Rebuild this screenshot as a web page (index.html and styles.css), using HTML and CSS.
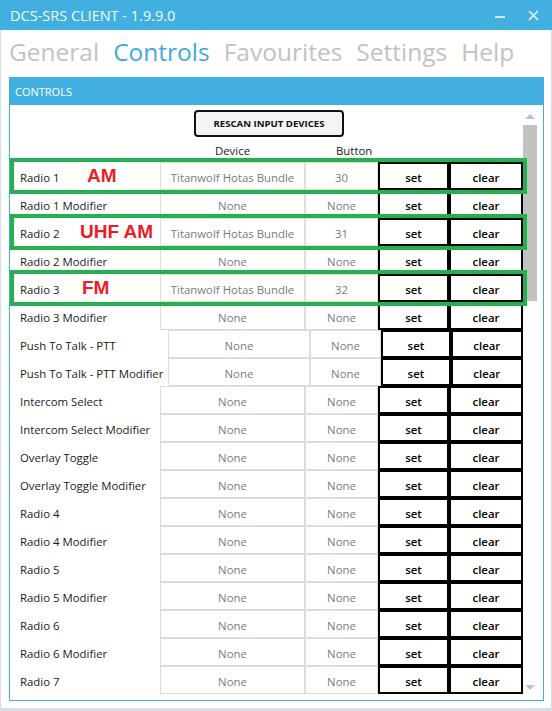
FILE: index.html
```html
<!DOCTYPE html>
<html>
<head>
<meta charset="utf-8">
<link rel="stylesheet" href="styles.css">
</head>
<body>
<div class="window">
  <div class="titlebar">
    <span class="title">DCS-SRS CLIENT - 1.9.9.0</span>
    <div class="winbtns">
      <span class="minimize"></span>
      <svg class="close" width="11" height="11" viewBox="0 0 11 11"><path d="M1 1L10 10M10 1L1 10" stroke="#dbeff9" stroke-width="1.7" fill="none"/></svg>
    </div>
  </div>
  <div class="content">
    <nav class="tabs">
      <span class="tab">General</span>
      <span class="tab active">Controls</span>
      <span class="tab">Favourites</span>
      <span class="tab">Settings</span>
      <span class="tab">Help</span>
    </nav>
    <section class="panel">
      <div class="panel-head">CONTROLS</div>
      <div class="panel-body">
        <div class="viewport">
          <div class="rescan-wrap"><button class="rescan">RESCAN INPUT DEVICES</button></div>
          <div class="ghead">
            <span></span>
            <span class="h-device">Device</span>
            <span class="h-button">Button</span>
          </div>

          <div class="row">
            <span class="label">Radio 1</span><span class="cell">Titanwolf Hotas Bundle</span><span class="cell">30</span><span class="act">set</span><span class="act">clear</span>
            <span class="note note-am">AM</span><span class="mark"></span>
          </div>
          <div class="row">
            <span class="label">Radio 1 Modifier</span><span class="cell">None</span><span class="cell">None</span><span class="act">set</span><span class="act">clear</span>
          </div>
          <div class="row">
            <span class="label">Radio 2</span><span class="cell">Titanwolf Hotas Bundle</span><span class="cell">31</span><span class="act">set</span><span class="act">clear</span>
            <span class="note note-uhf">UHF AM</span><span class="mark"></span>
          </div>
          <div class="row">
            <span class="label">Radio 2 Modifier</span><span class="cell">None</span><span class="cell">None</span><span class="act">set</span><span class="act">clear</span>
          </div>
          <div class="row">
            <span class="label">Radio 3</span><span class="cell">Titanwolf Hotas Bundle</span><span class="cell">32</span><span class="act">set</span><span class="act">clear</span>
            <span class="note note-fm">FM</span><span class="mark"></span>
          </div>
          <div class="row">
            <span class="label">Radio 3 Modifier</span><span class="cell">None</span><span class="cell">None</span><span class="act">set</span><span class="act">clear</span>
          </div>
          <div class="row wide">
            <span class="label">Push To Talk - PTT</span><span class="cell">None</span><span class="cell">None</span><span class="act">set</span><span class="act">clear</span>
          </div>
          <div class="row wide">
            <span class="label">Push To Talk - PTT Modifier</span><span class="cell">None</span><span class="cell">None</span><span class="act">set</span><span class="act">clear</span>
          </div>
          <div class="row">
            <span class="label">Intercom Select</span><span class="cell">None</span><span class="cell">None</span><span class="act">set</span><span class="act">clear</span>
          </div>
          <div class="row">
            <span class="label">Intercom Select Modifier</span><span class="cell">None</span><span class="cell">None</span><span class="act">set</span><span class="act">clear</span>
          </div>
          <div class="row">
            <span class="label">Overlay Toggle</span><span class="cell">None</span><span class="cell">None</span><span class="act">set</span><span class="act">clear</span>
          </div>
          <div class="row">
            <span class="label">Overlay Toggle Modifier</span><span class="cell">None</span><span class="cell">None</span><span class="act">set</span><span class="act">clear</span>
          </div>
          <div class="row">
            <span class="label">Radio 4</span><span class="cell">None</span><span class="cell">None</span><span class="act">set</span><span class="act">clear</span>
          </div>
          <div class="row">
            <span class="label">Radio 4 Modifier</span><span class="cell">None</span><span class="cell">None</span><span class="act">set</span><span class="act">clear</span>
          </div>
          <div class="row">
            <span class="label">Radio 5</span><span class="cell">None</span><span class="cell">None</span><span class="act">set</span><span class="act">clear</span>
          </div>
          <div class="row">
            <span class="label">Radio 5 Modifier</span><span class="cell">None</span><span class="cell">None</span><span class="act">set</span><span class="act">clear</span>
          </div>
          <div class="row">
            <span class="label">Radio 6</span><span class="cell">None</span><span class="cell">None</span><span class="act">set</span><span class="act">clear</span>
          </div>
          <div class="row">
            <span class="label">Radio 6 Modifier</span><span class="cell">None</span><span class="cell">None</span><span class="act">set</span><span class="act">clear</span>
          </div>
          <div class="row">
            <span class="label">Radio 7</span><span class="cell">None</span><span class="cell">None</span><span class="act">set</span><span class="act">clear</span>
          </div>
        </div>
        <div class="vscroll">
          <div class="sb-btn"><span class="arrow-up"></span></div>
          <div class="sb-track"><div class="sb-thumb"></div></div>
          <div class="sb-btn"><span class="arrow-down"></span></div>
        </div>
      </div>
    </section>
  </div>
</div>
</body>
</html>
```

FILE: styles.css
```css
* { box-sizing: border-box; margin: 0; padding: 0; }

body {
  margin: 0;
  background: #ffffff;
  font-family: "Open Sans", "Noto Sans", sans-serif;
}

.window {
  width: 552px;
  height: 711px;
  display: flex;
  flex-direction: column;
  overflow: hidden;
  background: #ffffff;
}

.titlebar {
  height: 30px;
  flex: none;
  background: #41afe0;
  color: #ffffff;
  display: flex;
  align-items: center;
  padding-left: 10px;
  padding-right: 13px;
}

.title {
  font-size: 14.5px;
  color: #f4fbfe;
}

.winbtns {
  margin-left: auto;
  display: flex;
  align-items: center;
  gap: 23px;
}

.minimize {
  display: block;
  width: 10px;
  height: 2px;
  margin-top: 4px;
  background: #cde9f6;
}

.close { display: block; }

.content {
  flex: 1;
  border: 1px solid #d6dee7;
  border-top: none;
  border-bottom-width: 3px;
  padding: 0 7px 7px 8px;
  display: flex;
  flex-direction: column;
}

.tabs {
  height: 47px;
  display: flex;
  gap: 14px;
  padding-top: 5px;
  font-size: 24.5px;
  line-height: normal;
}

.tab { color: #c5c1c1; }
.tab.active { color: #43a9dc; }

.panel {
  width: 535px;
  display: flex;
  flex-direction: column;
}

.panel-head {
  height: 28px;
  background: #41afe0;
  color: #ffffff;
  font-size: 11px;
  display: flex;
  align-items: center;
  padding-left: 6px;
}

.panel-body {
  height: 596px;
  border: 1px solid #41afe0;
  border-top: none;
  display: flex;
  padding: 1px 6px 5px 10px;
}

.viewport {
  width: 503px;
  height: 589px;
  flex: none;
  position: relative;
  z-index: 1;
}

.rescan-wrap {
  padding-top: 4px;
  padding-left: 174px;
}

.rescan {
  display: block;
  width: 150px;
  height: 27px;
  border: 2px solid #111111;
  border-radius: 4px;
  background: #f4f4f4;
  font-family: "Open Sans", sans-serif;
  font-weight: 700;
  font-size: 9.6px;
  color: #111111;
}

.ghead,
.row {
  display: grid;
  grid-template-columns: 140px 145fr 73fr 71fr 74fr;
}

.ghead {
  height: 25px;
  font-size: 11.4px;
  color: #222222;
  align-items: center;
  padding-top: 1px;
}

.h-device { text-align: center; }
.h-button { padding-left: 31px; }

.row {
  height: 28px;
  position: relative;
  font-size: 11.4px;
}

.row.wide {
  grid-template-columns: 148px 145fr 73fr 71fr 74fr;
}

.label,
.cell,
.act {
  display: flex;
  align-items: center;
  padding-top: 3px;
  white-space: nowrap;
}

.label { color: #1b1b1b; }

.cell {
  justify-content: center;
  border: 1px solid #dddddd;
  color: #7b7b7b;
  background: #ffffff;
}

.act {
  justify-content: center;
  border: 2px solid #000000;
  color: #000000;
  font-weight: 600;
  background: #ffffff;
}

.mark {
  position: absolute;
  left: -10px;
  right: -4px;
  top: -4px;
  bottom: -4px;
  border: 4px solid #22b14c;
  z-index: 2;
}

.note {
  position: absolute;
  top: 0;
  line-height: 28px;
  font-family: "Liberation Sans", Arial, sans-serif;
  font-weight: 700;
  font-size: 19px;
  color: #ed1c24;
  z-index: 3;
}

.note-am { left: 67px; }
.note-uhf { left: 60px; }
.note-fm { left: 62px; }

.vscroll {
  width: 14px;
  height: 588px;
  margin-top: 2px;
  display: flex;
  flex-direction: column;
  flex: none;
}

.sb-btn {
  height: 17px;
  display: flex;
  align-items: center;
  justify-content: center;
}

.arrow-up,
.arrow-down {
  display: block;
  width: 0;
  height: 0;
  border-left: 5.5px solid transparent;
  border-right: 5.5px solid transparent;
}

.arrow-up { border-bottom: 5px solid #c2c2c2; }
.arrow-down { border-top: 5px solid #c2c2c2; }

.sb-track {
  flex: 1;
}

.sb-thumb {
  height: 176px;
  background: #c2c2c2;
}
```
